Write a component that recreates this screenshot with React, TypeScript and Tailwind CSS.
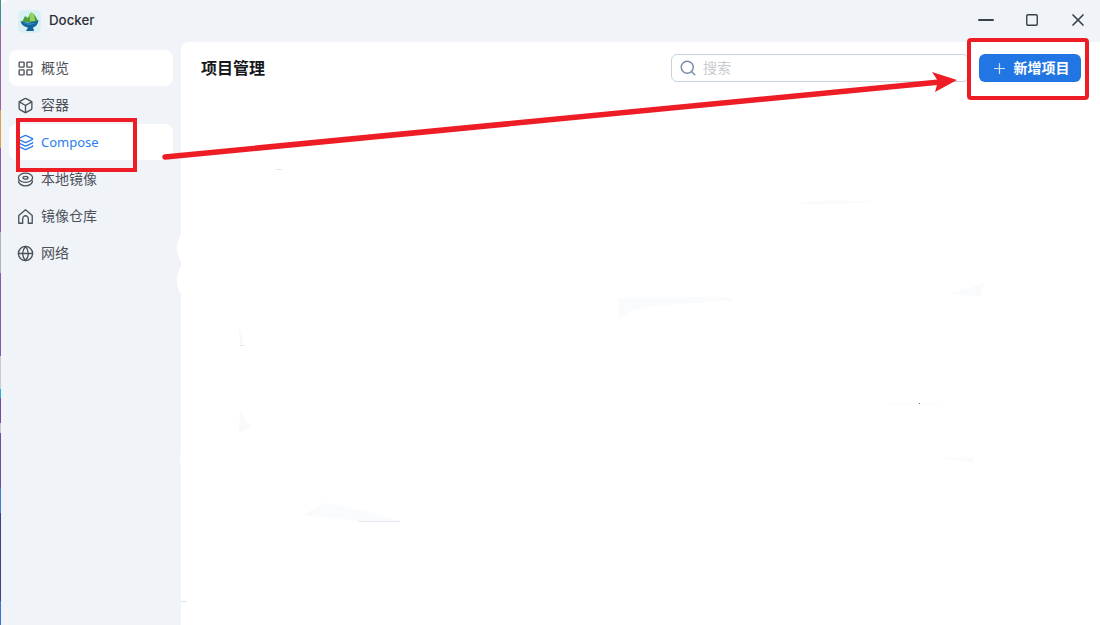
import { Box, Layers, Globe, Search, Plus, Minus, Square, X, LayoutGrid } from "lucide-react";

const font = { fontFamily: "Inter, 'Noto Sans CJK SC', sans-serif" };

function DiskIcon({ className }: { className?: string }) {
  return (
    <svg width="17" height="17" viewBox="0 0 24 24" fill="none" stroke="currentColor" strokeWidth="1.9" className={className}>
      <ellipse cx="12" cy="9.5" rx="10" ry="6.5" />
      <ellipse cx="12" cy="9.5" rx="3.5" ry="2" />
      <path d="M2 13.5C2 18 6.5 21 12 21s10-3 10-7.5" />
    </svg>
  );
}

function HomeIcon({ className }: { className?: string }) {
  return (
    <svg width="17" height="17" viewBox="0 0 24 24" fill="none" stroke="currentColor" strokeWidth="1.9" strokeLinejoin="round" className={className}>
      <path d="M2.500 10.500 12 2.500l9.500 8V21.500H16V15a4 4 0 0 0-8 0v6.500H2.500Z" />
    </svg>
  );
}

const navItems = [
  { label: "概览", icon: LayoutGrid },
  { label: "容器", icon: Box },
  { label: "Compose", icon: Layers },
  { label: "本地镜像", icon: DiskIcon },
  { label: "镜像仓库", icon: HomeIcon },
  { label: "网络", icon: Globe },
];

const wallpaper = [
  "h-[26px] bg-[#3f8f8f]",
  "h-[84px] bg-[#9a63a8]",
  "h-[38px] bg-[#d8a24c]",
  "h-[84px] bg-[#8f5ba8]",
  "h-[41px] bg-[#a9b7b8]",
  "h-[83px] bg-[#8a58a8]",
  "h-[33px] bg-[#c9cdd0]",
  "h-[9px] bg-[#27afd8]",
  "h-[25px] bg-[#7a4a9d]",
  "h-[10px] bg-[#c8c8d0]",
  "h-[55px] bg-[#6d4ea3]",
  "h-[25px] bg-[#3d7fd6]",
  "h-[88px] bg-[#3f3f86]",
  "h-[24px] bg-[#3574d8]",
];

function Logo() {
  return (
    <svg width="23" height="23" viewBox="0 0 23 23" className="shrink-0">
      <rect width="23" height="23" rx="5" fill="#d9f1f5" />
      <path d="M4 12 L7 6 L10 8 L12.500 2.500 L16 4 L19 9 L20 12 Z" fill="#4fa03c" />
      <path d="M11.500 4 L13 2.500 L16 4 L17 11 L12 11 Z" fill="#93d45c" />
      <path d="M2.500 11 C7 13 14 13 20.500 10 C20 15 17 17 15 17.500 L16 21 L8 21 L10 17.500 C6.500 17 3.500 15 2.500 11 Z" fill="#14639a" />
      <path d="M5 12.500 C9 14 14 14 18 12 C15 15.500 9 15.500 5 12.500 Z" fill="#2c9ac4" />
    </svg>
  );
}

export default function App() {
  return (
    <div className="relative flex h-[625px] w-[1100px] overflow-hidden bg-white" style={font}>
      <div className="flex w-px shrink-0 flex-col">
        {wallpaper.map((c) => (
          <div key={c} className={c} />
        ))}
      </div>

      <div className="flex min-w-0 flex-1 flex-col rounded-tl-lg bg-[#f0f4f8]">
        <header className="flex h-[42px] shrink-0 items-center pl-[17px]">
          <Logo />
          <span className="ml-2 text-[13.3px] font-medium text-[#2c3036]">Docker</span>
          <div className="ml-auto flex items-center pb-[2px] pr-[12px] text-[#3c4048]">
            <Minus size={24} strokeWidth={2} />
            <Square size={14} strokeWidth={2.4} className="ml-[27px]" />
            <X size={20} strokeWidth={2} className="ml-[29px]" />
          </div>
        </header>

        <div className="flex min-h-0 flex-1">
          <nav className="flex w-[180px] shrink-0 flex-col gap-px pl-2 pr-2 pt-2">
            {navItems.map(({ label, icon: Icon }) => {
              const active = label === "Compose";
              const filled = active || label === "概览";
              return (
                <div
                  key={label}
                  className={`flex h-9 items-center gap-[7px] rounded-lg pl-2 ${filled ? "bg-white" : ""} ${
                    active ? "text-[#2b7de9]" : "text-[#4c5058]"
                  }`}
                >
                  {/* lucide icons take size, the two drawn ones are fixed at 17 */}
                  <Icon size={17} strokeWidth={1.9} className="shrink-0" />
                  <span className={active ? "pt-[2px] text-[13px] [font-family:'Noto_Sans']" : "pb-[2px] text-[14px]"}>
                    {label}
                  </span>
                </div>
              );
            })}
          </nav>

          <main className="min-w-0 flex-1 rounded-tl-lg bg-white">
            <div className="flex items-center pl-5 pr-[19px] pt-3">
              <h1 className="text-[16px] font-bold text-[#16181c]">项目管理</h1>
              <div className="ml-auto flex h-7 w-[298px] items-center gap-[6px] rounded-md border border-[#c9d1de] pl-[7px]">
                <Search size={18} strokeWidth={1.9} className="text-[#7b8aa6]" />
                <span className="pb-[1px] text-[14px] text-[#c8cbd1]">搜索</span>
              </div>
              <button className="ml-[10px] flex h-7 w-[102px] items-center justify-center gap-[6px] rounded-md bg-[#2276e3] text-[14px] font-bold text-white">
                <Plus size={17} strokeWidth={1.7} className="text-[#cfe2fa]" />
                <span className="pb-[2px]">新增项目</span>
              </button>
            </div>
          </main>
        </div>
      </div>

      {/* leftovers of the blurred-out list, bulging over the sidebar edge */}
      <div className="absolute left-[177px] top-[232px] h-[32px] w-5 rounded-[50%] bg-white" />
      <div className="absolute left-[177px] top-[263px] h-[35px] w-5 rounded-[50%] bg-white" />
      <div className="absolute left-[180px] top-[447px] h-[25px] w-5 rounded-[50%] bg-white" />

      {/* annotations drawn on top of the screenshot */}
      <div className="absolute left-[16px] top-[118px] h-[54px] w-[121px] border-4 border-[#ee1c25]" />
      <div className="absolute left-[967px] top-[38px] h-[62px] w-[122px] rounded-sm border-4 border-[#ee1c25]" />
      <svg className="absolute left-0 top-0" width="1100" height="625">
        <path d="M798 203 Q830 198 880 202 Q830 204 802 205 Z" fill="#fafbfd" />
        <path d="M618 298 L730 297 L733 301 Q660 304 638 309 Q625 313 619 320 Z" fill="#fafbfd" />
        <path d="M947 293 Q970 289 985 282 L980 297 Z" fill="#fafbfd" />
        <path d="M940 458 L973 457 L973 463 Z" fill="#fafbfd" />
        <path d="M888 403 H940 V404 H888 Z" fill="#fafbfd" />
        <path d="M919 403 H920 V404 H919 Z" fill="#3f8f8f" />
        <path d="M239 325 L243 345 L240 345 Z" fill="#f6f8fb" />
        <path d="M240 345 H245 V346 H240 Z" fill="#e3e7f0" />
        <path d="M241 408 Q243 422 252 427 L238 433 Z" fill="#f8fafc" />
        <path d="M303 515 L323 503 Q360 508 400 521 L358 521 Z" fill="#fafbfd" />
        <path d="M358 521 H400 V522 H358 Z" fill="#e3e7f0" />
        <path d="M276 169 H282 V170 H276 Z" fill="#e3e7f0" />
        <path d="M181 601 H187 V602 H181 Z" fill="#e3e7f0" />
        <path d="M165 157 L940 82" stroke="#ee1c25" strokeWidth="5.5" strokeLinecap="round" />
        <path d="M932 72 L957 80 L935 92 L938 81 Z" fill="#ee1c25" />
      </svg>
    </div>
  );
}
